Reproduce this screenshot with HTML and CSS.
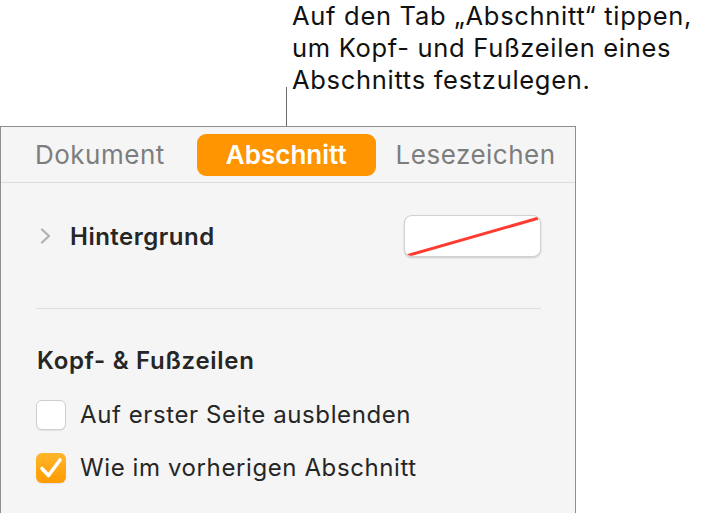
FILE: index.html
```html
<!DOCTYPE html>
<html lang="de">
<head>
    <meta charset="UTF-8">
    <title>Abschnitt</title>
    <link rel="stylesheet" href="styles.css">
</head>
<body>
    <div class="note">
        <div class="leader"></div>
        <p class="note-text">Auf den Tab „Abschnitt“ tippen,<br>um Kopf- und Fußzeilen eines<br>Abschnitts festzulegen.</p>
    </div>

    <div class="panel">
        <div class="tabs">
            <span class="tab tab-first">Dokument</span>
            <span class="tab tab-active">Abschnitt</span>
            <span class="tab">Lesezeichen</span>
        </div>

        <div class="section">
            <div class="row-bg">
                <span class="chevron">
                    <svg width="12" height="16" viewBox="0 0 12 16"><path d="M2 1.5 L9 8 L2 14.5" fill="none" stroke="#b0b0b0" stroke-width="2.2" stroke-linecap="round" stroke-linejoin="round"/></svg>
                </span>
                <span class="row-title">Hintergrund</span>
                <span class="well">
                    <svg width="137" height="42" viewBox="0 0 137 42"><line x1="2" y1="40" x2="135" y2="2" stroke="#ff3b30" stroke-width="3"/></svg>
                </span>
            </div>
            <div class="divider"></div>
            <h3 class="group-title">Kopf- &amp; Fußzeilen</h3>
            <div class="check-row">
                <span class="box"></span>
                <span>Auf erster Seite ausblenden</span>
            </div>
            <div class="check-row">
                <span class="box box-on">
                    <svg width="30" height="30" viewBox="0 0 30 30"><path d="M6 15.5 L12.5 22.5 L24 7" fill="none" stroke="#fff" stroke-width="3.6" stroke-linecap="round" stroke-linejoin="round"/></svg>
                </span>
                <span>Wie im vorherigen Abschnitt</span>
            </div>
        </div>
    </div>
</body>
</html>
```

FILE: styles.css
```css
*{
    box-sizing: border-box;
}
body{
    margin: 0;
    background: #fff;
    font-family: Inter, "Noto Sans", sans-serif;
    color: #262626;
}
.note{
    display: flex;
    height: 126px;
    padding-left: 286px;
}
.leader{
    width: 1px;
    height: 39px;
    align-self: flex-end;
    background: #6b6b6b;
    margin-right: 5px;
}
.note-text{
    margin: 0;
    font-size: 25.5px;
    line-height: 32px;
    letter-spacing: 0.7px;
    color: #111;
}
.panel{
    width: 576px;
    height: 387px;
    border: 1px solid #8e8e8e;
    border-bottom: none;
    background: #f5f5f5;
}
.tabs{
    display: flex;
    align-items: center;
    height: 56px;
    padding-left: 14px;
    border-bottom: 1px solid #dcdcdc;
}
.tab{
    padding: 0 20px;
    font-size: 26px;
    line-height: 42px;
    letter-spacing: 0.5px;
    color: #7d7d7d;
}
.tab-first{
    margin-right: 12px;
}
.tab-active{
    padding: 0 29px;
    border-radius: 9px;
    background: #ff9500;
    color: #fff;
    font-weight: 600;
    letter-spacing: 0;
}
.section{
    padding: 0 34px 0 35px;
}
.row-bg{
    display: flex;
    align-items: center;
    height: 106px;
}
.chevron{
    display: flex;
    margin-left: 4px;
    margin-right: 18px;
}
.row-title{
    font-size: 24px;
    font-weight: 600;
    letter-spacing: 0.5px;
    flex-grow: 1;
}
.well{
    display: flex;
    width: 137px;
    height: 42px;
    border-radius: 8px;
    background: #fff;
    border: 1px solid #d2d2d2;
    box-shadow: 0 1px 2px rgba(0,0,0,.18);
    overflow: hidden;
}
.divider{
    margin-top: 19px;
    height: 1px;
    background: #dedede;
}
.group-title{
    margin: 38px 0 13px 1px;
    font-size: 24px;
    font-weight: 600;
    line-height: 28px;
    letter-spacing: 0.7px;
}
.check-row{
    display: flex;
    align-items: center;
    gap: 14px;
    height: 53px;
    font-size: 24px;
    letter-spacing: 0.6px;
}
.box{
    display: flex;
    align-items: center;
    justify-content: center;
    width: 30px;
    height: 30px;
    border-radius: 6px;
    background: #fff;
    border: 1px solid #cfcfcf;
    box-shadow: 0 1px 1px rgba(0,0,0,.08);
}
.box-on{
    border: none;
    background: linear-gradient(#ffb52b, #ff9c00);
}
```
